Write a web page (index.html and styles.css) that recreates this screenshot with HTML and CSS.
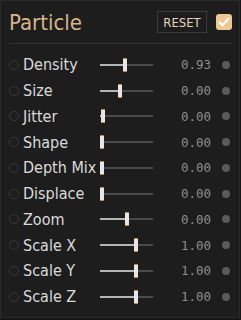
FILE: index.html
```html
<!DOCTYPE html>
<html lang="en">
<head>
    <meta charset="UTF-8">
    <meta name="viewport" content="width=device-width, initial-scale=1.0">
    <title>Particle</title>
    <link rel="stylesheet" href="styles.css">
</head>
<body>
    <div class="panel">
        <div class="panel-header">
            <h2 class="title">Particle</h2>
            <button class="reset-button">RESET</button>
            <span class="toggle">
                <svg width="12" height="10" viewBox="0 0 12 10"><path d="M1.5 5.2 L4.6 8.2 L10.5 1.8" fill="none" stroke="#fff" stroke-width="2" stroke-linecap="round" stroke-linejoin="round"/></svg>
            </span>
        </div>
        <div class="divider"></div>
        <div class="param-list">
            <div class="param"><span class="ring"></span><span class="label">Density</span><div class="slider" style="--p: 47%"><div class="fill"></div><div class="thumb"></div></div><span class="value">0.93</span><span class="dot"></span></div>
            <div class="param"><span class="ring"></span><span class="label">Size</span><div class="slider" style="--p: 36%"><div class="fill"></div><div class="thumb"></div></div><span class="value">0.00</span><span class="dot"></span></div>
            <div class="param"><span class="ring"></span><span class="label">Jitter</span><div class="slider" style="--p: 2%"><div class="fill"></div><div class="thumb"></div></div><span class="value">0.00</span><span class="dot"></span></div>
            <div class="param"><span class="ring"></span><span class="label">Shape</span><div class="slider" style="--p: 0%"><div class="fill"></div><div class="thumb"></div></div><span class="value">0.00</span><span class="dot"></span></div>
            <div class="param"><span class="ring"></span><span class="label">Depth Mix</span><div class="slider" style="--p: 0%"><div class="fill"></div><div class="thumb"></div></div><span class="value">0.00</span><span class="dot"></span></div>
            <div class="param"><span class="ring"></span><span class="label">Displace</span><div class="slider" style="--p: 0%"><div class="fill"></div><div class="thumb"></div></div><span class="value">0.00</span><span class="dot"></span></div>
            <div class="param"><span class="ring"></span><span class="label">Zoom</span><div class="slider" style="--p: 51%"><div class="fill"></div><div class="thumb"></div></div><span class="value">0.00</span><span class="dot"></span></div>
            <div class="param"><span class="ring"></span><span class="label">Scale X</span><div class="slider" style="--p: 69%"><div class="fill"></div><div class="thumb"></div></div><span class="value">1.00</span><span class="dot"></span></div>
            <div class="param"><span class="ring"></span><span class="label">Scale Y</span><div class="slider" style="--p: 69%"><div class="fill"></div><div class="thumb"></div></div><span class="value">1.00</span><span class="dot"></span></div>
            <div class="param"><span class="ring"></span><span class="label">Scale Z</span><div class="slider" style="--p: 69%"><div class="fill"></div><div class="thumb"></div></div><span class="value">1.00</span><span class="dot"></span></div>
        </div>
    </div>
</body>
</html>
```

FILE: styles.css
```css
body {
    margin: 0;
    background-color: #161616;
    font-family: 'Liberation Sans Narrow', 'DejaVu Sans Condensed', 'Liberation Sans', sans-serif;
}

.panel {
    box-sizing: border-box;
    width: 240px;
    height: 318px;
    padding: 0 7px 0 8px;
    background-color: #1d1d1d;
    border: 1px solid #2a2a2a;
}

.panel-header {
    display: flex;
    align-items: center;
    height: 24px;
    padding: 9px 0 9px 0;
}

.title {
    flex: 1;
    margin: 0;
    font-size: 22px;
    font-weight: normal;
    color: #d6b68c;
}

.reset-button {
    width: 50px;
    height: 22px;
    padding: 0;
    margin-right: 9px;
    background: transparent;
    border: 1px solid #3b3b3b;
    color: #e4d4ba;
    font-family: inherit;
    font-size: 13px;
}

.toggle {
    display: flex;
    align-items: center;
    justify-content: center;
    width: 16px;
    height: 16px;
    border-radius: 3px;
    background-color: #efc795;
}

.divider {
    height: 1px;
    background-color: #333;
}

.param-list {
    padding-top: 8px;
}

.param {
    display: grid;
    grid-template-columns: 14px 77px 53px 58px 18px;
    align-items: center;
    height: 25.75px;
}

.ring {
    box-sizing: border-box;
    width: 10px;
    height: 10px;
    border: 1px solid #393939;
    border-radius: 50%;
}

.label {
    font-size: 16px;
    color: #dadada;
    white-space: nowrap;
}

.slider {
    position: relative;
    height: 14px;
    background: linear-gradient(#4a4a4a, #4a4a4a) 0 6px / 100% 2px no-repeat;
}

.fill {
    position: absolute;
    left: 0;
    top: 6px;
    width: calc(var(--p) * 0.49 / 0.53);
    height: 2px;
    background-color: #b4b4b4;
}

.thumb {
    position: absolute;
    top: 0;
    left: calc(var(--p) * 0.49 / 0.53);
    box-sizing: border-box;
    width: 4px;
    height: 14px;
    background-color: #e6e6e6;
    border-top: 1px solid #c98b45;
    border-bottom: 1px solid #c98b45;
    border-radius: 1px;
}

.value {
    text-align: right;
    font-family: 'DejaVu Sans Mono', monospace;
    font-size: 12.5px;
    color: #8e8e8e;
}

.dot {
    justify-self: end;
    width: 8px;
    height: 8px;
    margin-right: -0.5px;
    border-radius: 50%;
    background-color: #5a5a5a;
}
```
